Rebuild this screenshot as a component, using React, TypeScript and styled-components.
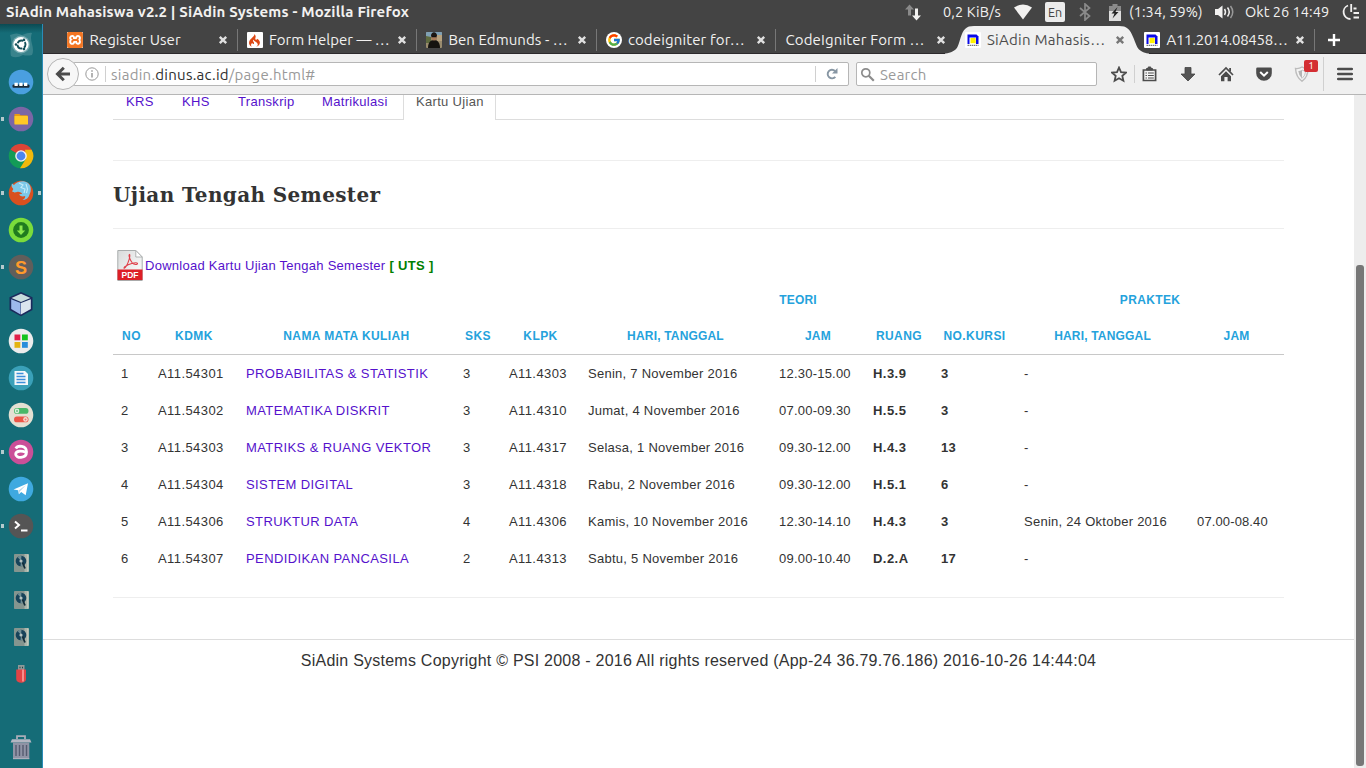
import React from "react";
import styled, { createGlobalStyle } from "styled-components";
import { FcGoogle } from "react-icons/fc";
import { SiXampp, SiCodeigniter } from "react-icons/si";

const uiFont = `"Ubuntu", "Noto Sans", "Open Sans", sans-serif`;
const pageFont = `"Liberation Sans", Arial, sans-serif`;

const GlobalStyle = createGlobalStyle`
  * { box-sizing: border-box; }
  html, body { margin: 0; padding: 0; overflow: hidden; background: #fff; }
  a { text-decoration: none; color: #5511cc; }
`;

const Desktop = styled.div`
  width: 1366px;
  height: 768px;
  display: flex;
  flex-direction: column;
  overflow: hidden;
  font-family: ${uiFont};
`;

/* ---------- top panel ---------- */

const Panel = styled.header`
  height: 24px;
  flex: none;
  display: flex;
  align-items: center;
  justify-content: space-between;
  padding: 0 6px 0 6px;
  background: #444444;
  color: #f2f1f0;
`;

const Label = styled.span<{ $size?: number; $track?: number; $weight?: number; $w?: number }>`
  display: inline-block;
  white-space: pre;
  font-size: ${(p) => p.$size ?? 15}px;
  letter-spacing: ${(p) => p.$track ?? 0}px;
  font-weight: ${(p) => p.$weight ?? 400};
  width: ${(p) => (p.$w ? `${p.$w}px` : "auto")};
  line-height: 24px;
`;

const FieldText = styled(Label)`
  padding-top: 1px;
`;

const Indicators = styled.div`
  display: flex;
  align-items: center;
  height: 24px;
  svg { flex: none; display: block; }
`;

const Gap = styled.span<{ $w: number }>`
  flex: none;
  width: ${(p) => p.$w}px;
`;

const Keyboard = styled.span`
  flex: none;
  width: 20px;
  height: 20px;
  border-radius: 2px;
  background: #ececec;
  color: #444;
  font-size: 12.5px;
  line-height: 20px;
  text-align: center;
`;

/* ---------- launcher ---------- */

const Body = styled.div`
  flex: 1;
  display: flex;
  min-height: 0;
`;

const Launcher = styled.nav`
  width: 43px;
  flex: none;
  display: flex;
  flex-direction: column;
  background: linear-gradient(#0b4a52 0, #156c77 9px);
  border-right: 1px solid #2b8cb8;
  padding-top: 2px;
`;

const LauncherItem = styled.div<{ $last?: boolean }>`
  height: 37px;
  display: flex;
  align-items: center;
  margin-top: ${(p) => (p.$last ? "36px" : "0")};
  svg { display: block; margin: 0; flex: none; }
`;

const Pip = styled.i<{ $on?: boolean }>`
  flex: none;
  width: 3px;
  height: 4px;
  margin: 0 4px 0 1px;
  background: ${(p) => (p.$on ? "#b4cacd" : "transparent")};
  & + svg + & { margin: 0 0 0 4px; }
`;

/* ---------- browser chrome ---------- */

const Browser = styled.main`
  flex: 1;
  min-width: 0;
  display: flex;
  flex-direction: column;
`;

const TabStrip = styled.div`
  height: 30px;
  flex: none;
  display: flex;
  padding-left: 15.4px;
  background: #444444;
  box-shadow: inset 0 -1px #2c292c;
`;

const BrowserTab = styled.div<{ $active?: boolean; $sep?: boolean }>`
  position: relative;
  width: 179.5px;
  flex: none;
  display: flex;
  align-items: center;
  padding: 2px 9px 0 9px;
  color: ${(p) => (p.$active ? "#4c4c4c" : "#f2f1f0")};
  &::after {
    content: "";
    position: absolute;
    right: 0;
    top: 5px;
    width: 1px;
    height: 22px;
    background: ${(p) => (p.$sep ? "#777" : "transparent")};
  }
`;

const ActiveShape = styled.svg`
  position: absolute;
  left: -11px;
  top: 0;
`;

const Favicon = styled.span<{ $bg?: string; $round?: boolean }>`
  position: relative;
  flex: none;
  width: 16px;
  height: 16px;
  margin-right: 6px;
  display: flex;
  align-items: center;
  justify-content: center;
  background: ${(p) => p.$bg ?? "transparent"};
  border-radius: ${(p) => (p.$round ? "8px" : "1px")};
  overflow: hidden;
`;

const TabTitle = styled(Label)`
  position: relative;
  flex: 1;
  min-width: 0;
`;

const CloseMark = styled.svg`
  position: relative;
  flex: none;
`;

const Toolbar = styled.div`
  height: 41px;
  flex: none;
  display: flex;
  align-items: center;
  padding-left: 4px;
  background: #f0f0f0;
  border-bottom: 1px solid #b6b6b6;
  svg { flex: none; display: block; }
`;

const BackButton = styled.button`
  position: relative;
  z-index: 1;
  width: 32px;
  height: 32px;
  padding: 0;
  border: 1px solid #b4b4b4;
  border-radius: 50%;
  background: #f7f7f7;
  display: flex;
  align-items: center;
  justify-content: center;
`;

const Field = styled.div<{ $w: number }>`
  width: ${(p) => p.$w}px;
  height: 24px;
  display: flex;
  align-items: center;
  background: #fff;
  border: 1px solid #b6b6b6;
  border-radius: 2px;
  color: #999;
`;

const UrlField = styled(Field)`
  margin-left: -6px;
  padding-left: 11px;
  b { font-weight: 400; color: #2e2e2e; }
`;

const SearchField = styled(Field)`
  margin-left: 7px;
  padding-left: 3px;
`;

const Rule = styled.span<{ $h: number }>`
  flex: none;
  width: 1px;
  height: ${(p) => p.$h}px;
  background: #d0d0d0;
`;

const ShieldWrap = styled.span`
  position: relative;
  flex: none;
  width: 16px;
  height: 16px;
`;

const Badge = styled.span`
  position: absolute;
  left: 10px;
  top: -6px;
  width: 14px;
  height: 12px;
  border-radius: 2px;
  background: #d42f33;
  color: #fff;
  font-size: 10px;
  line-height: 12px;
  text-align: center;
`;

/* ---------- page ---------- */

const Viewport = styled.div`
  flex: 1;
  display: flex;
  min-height: 0;
  font-family: ${pageFont};
  font-size: 13px;
  letter-spacing: 0.26px;
  color: #333;
`;

const Page = styled.div`
  flex: 1;
  background: #fff;
  overflow: hidden;
`;

const Scrollbar = styled.div`
  width: 12px;
  flex: none;
  padding: 170px 2px 0;
  background: #ededed;
`;

const Thumb = styled.div`
  height: 501px;
  border-radius: 3px;
  background: #777777;
`;

const Container = styled.section`
  width: 1171px;
  margin-left: 70px;
`;

const NavTabs = styled.ul`
  display: flex;
  height: 25px;
  margin: 0;
  padding: 0;
  list-style: none;
  border-bottom: 1px solid #ddd;
`;

const NavItem = styled.li<{ $w: number; $active?: boolean }>`
  width: ${(p) => p.$w}px;
  height: 25px;
  padding-left: ${(p) => (p.$active ? 12 : 13)}px;
  line-height: 14px;
  white-space: nowrap;
  letter-spacing: 0.32px;
  color: #555;
  ${(p) => p.$active && "background: #fff; border: solid #ddd; border-width: 0 1px;"}
`;

const Divider = styled.hr<{ $top: number }>`
  height: 1px;
  margin: ${(p) => p.$top}px 0 0;
  border: 0;
  background: #eee;
`;

const Heading = styled.h4`
  margin: 0;
  height: 67px;
  font: 700 20px/69px "DejaVu Serif", serif;
  letter-spacing: 0.36px;
`;

const Download = styled.p`
  display: flex;
  align-items: center;
  height: 33px;
  margin: 20px 0 0;
  padding-left: 4px;
  svg { display: block; margin-right: 2px; }
  strong { color: #008000; margin-left: 4px; letter-spacing: 0.35px; }
`;

const Table = styled.table`
  width: 1171px;
  table-layout: fixed;
  border-collapse: separate;
  border-spacing: 0;
`;

const HeadCell = styled.th<{ $rule?: boolean; $track?: number }>`
  height: ${(p) => (p.$rule ? 37 : 36)}px;
  padding: 0;
  font-size: 12px;
  letter-spacing: ${(p) => p.$track ?? 0.35}px;
  color: #25a2dc;
  white-space: nowrap;
  text-align: center;
  ${(p) => p.$rule && "border-bottom: 1px solid #c8c8c8;"}
`;

const Cell = styled.td<{ $bold?: boolean; $track: number }>`
  height: 37px;
  padding: 0 0 0 8px;
  white-space: nowrap;
  letter-spacing: ${(p) => p.$track}px;
  font-weight: ${(p) => (p.$bold ? 700 : 400)};
`;

const Footer = styled.footer`
  margin-top: 41px;
  border-top: 1px solid #ddd;
  font-size: 16px;
  letter-spacing: 0.24px;
  line-height: 41px;
  text-align: center;
`;

/* ---------- drawings ---------- */

const Close = ({ color = "#e0e0e0" }: { color?: string }) => (
  <CloseMark width="12" height="12" viewBox="0 0 12 12">
    <path d="M2.8 2.8L9.2 9.2M9.2 2.8L2.8 9.2" stroke={color} strokeWidth="2.4" />
  </CloseMark>
);

const DinusIcon = () => (
  <svg width="16" height="16" viewBox="0 0 16 16">
    <path d="M2.500 2.500h9l2 2V12H2.500z" fill="#0a0ae6" />
    <path d="M4.500 5.500h6.500V12H4.500z" fill="#fff" />
    <rect x="5.500" y="6" width="5.200" height="5.200" fill="#fff000" />
    <path d="M2.500 13.400h11" stroke="#777" strokeWidth="1.200" strokeDasharray="1.500 .6" />
  </svg>
);

const PhotoIcon = () => (
  <svg width="16" height="16" viewBox="0 0 16 16">
    <rect width="16" height="16" fill="#9a8c6e" />
    <rect width="16" height="5" fill="#7fa0b4" />
    <path d="M0 4l5 1v6H0z" fill="#5f6b3f" />
    <path d="M11 3h5v6h-5z" fill="#b7a27e" />
    <path d="M2 16c0-5 2-8 6-8s6 3 6 8z" fill="#15130f" />
    <ellipse cx="8" cy="5" rx="2.8" ry="3.6" fill="#a97b58" />
    <path d="M5 4c0-5 6-5 6 0z" fill="#1d1713" />
    <path d="M5.4 4.6h5.2" stroke="#111" strokeWidth="1.2" />
  </svg>
);

const PdfIcon = () => (
  <svg width="26" height="33" viewBox="0 0 26 33">
    <defs>
      <linearGradient id="paper" x1="0" y1="0" x2="1" y2="1">
        <stop offset="0" stopColor="#d9dbdb" />
        <stop offset="1" stopColor="#fff" />
      </linearGradient>
    </defs>
    <path d="M.8 31V1.5h18L25.2 8v23z" fill="url(#paper)" stroke="#a9adad" />
    <path d="M18.8 1.5V8h6.4z" fill="#fff" stroke="#a9adad" strokeWidth=".9" />
    <path d="M12.600 5.500c-1.600.6.6 5.500 2.600 8.300c1.800 2 5.500 2.200 5.300.6c-.6-1.600-8.500-.2-13 3.600c-1.500 2 .4 1.500 2-1.200C11.500 13 13.500 7 12.600 5.500z" fill="none" stroke="#e0404a" strokeWidth="1.100" />
    <rect x=".5" y="20.500" width="25" height="10.500" fill="#dd1f26" />
    <path d="M.5 31.500h25" stroke="#aaa" />
    <text x="13" y="28.900" textAnchor="middle" fill="#fff" fontFamily="Liberation Sans" fontSize="8.500" fontWeight="700" letterSpacing="0">PDF</text>
  </svg>
);

const Icon = ({ children }: { children: React.ReactNode }) => (
  <svg width="26" height="26" viewBox="0 0 26 26">{children}</svg>
);

const Disk = () => (
  <Icon>
    <rect x="6" y="4" width="14.500" height="18" rx=".8" fill="#85958f" />
    <rect x="16.500" y="4" width="4" height="18" fill="#aab4aa" />
    <rect x="19.500" y="4.500" width="1" height="17" fill="#d8dccb" />
    <circle cx="13" cy="11" r="5.300" fill="#17435a" />
    <path d="M13 11L9.500 7a5.300 5.300 0 014-1.300zM13 11l3.500 4a5.300 5.300 0 01-4 1.300z" fill="#6f8e95" />
    <circle cx="13" cy="11" r="1.600" fill="#b4c2c0" />
    <path d="M14.500 12.500l2.500 6" stroke="#122c38" strokeWidth="1.800" />
  </Icon>
);

const launcherItems: { left?: boolean; right?: boolean; icon: React.ReactNode }[] = [
  { icon: (
    <Icon>
      <path d="M2 3q7-3 12 0q8-3 10-2q-2 4 0 11t0 11q-5 1-9 0q-7 4-12 1q-1-4 0-9t-1-12z" fill="#8fb9bd" opacity=".3" />
      <circle cx="13" cy="12.500" r="9" fill="#a9cdd0" opacity=".5" />
      <circle cx="13" cy="12.500" r="7.600" fill="#fff" />
      <circle cx="13.500" cy="12.500" r="4" fill="none" stroke="#14505a" strokeWidth="1.900" strokeDasharray="6.700 1.680" strokeDashoffset="-5.200" />
      <circle cx="8" cy="12.500" r="1.300" fill="#14505a" />
      <circle cx="16" cy="7.900" r="1.300" fill="#14505a" />
      <circle cx="16" cy="17.100" r="1.300" fill="#14505a" />
    </Icon>) },
  { icon: (
    <Icon>
      <circle cx="13" cy="13" r="12.300" fill="#4a9fe0" />
      <rect x="4.500" y="15.500" width="17" height="3.300" rx="1" fill="#1c2c38" />
      <path d="M6.500 15.300h3.300M11.300 15.300h3.300M16 15.300h3.300" stroke="#fff" strokeWidth="3.200" />
    </Icon>) },
  { left: true, icon: (
    <Icon>
      <circle cx="13" cy="13" r="12.300" fill="#7b66a5" />
      <path d="M6.500 8h5l1 1.300h7V17.500h-13z" fill="#e79a16" />
      <rect x="6.500" y="10" width="13.500" height="8.500" rx=".6" fill="#ffc926" />
    </Icon>) },
  { icon: (
    <Icon>
      <path d="M13 13L2.350 6.850A12.300 12.300 0 0123.650 6.850z" fill="#dc4437" />
      <path d="M2.350 6.850A12.300 12.300 0 0013 25.300l5-9.500-5-2.800z" fill="#139b57" />
      <path d="M23.650 6.850A12.300 12.300 0 0112 25.300l6-9.500-1-8.950z" fill="#f2b90c" />
      <circle cx="13" cy="13" r="5.800" fill="#f2f2f2" />
      <circle cx="13" cy="13" r="4.400" fill="#4a86ee" />
    </Icon>) },
  { left: true, right: true, icon: (
    <Icon>
      <circle cx="13" cy="13" r="12.300" fill="#d9501f" />
      <path d="M4 3.500l2 1.500C9 1 16 0 20 3c3.500 3 3.500 8 1.500 11.500-.8 3-3 5.500-7 5.500 2-1 3-2.500 2.600-4-2 1-5 .5-6-1.500 1-.5 2-.3 3-1-1.500-1-3-2-5-1.500-2 .5-4 1-5-1 1.200-.8 1.500-2 .5-3-1.200-1.200-1.200-3-.6-4.500z" fill="#7cc8e8" />
      <path d="M11 3l4 2-2 2.500 4 1.500-1 4M18 4l1.500 5-1 4" fill="none" stroke="#c6ebf8" strokeWidth="1.100" />
    </Icon>) },
  { icon: (
    <Icon>
      <circle cx="13" cy="13" r="12.300" fill="#7bdc3b" />
      <circle cx="13" cy="13" r="7.900" fill="#207b1f" />
      <path d="M11.500 8.500h3v5h2.700L13 18l-4.200-4.500h2.700z" fill="#8be84d" />
    </Icon>) },
  { left: true, icon: (
    <Icon>
      <circle cx="13" cy="13" r="12.300" fill="#615e5b" />
      <text x="13" y="19.500" textAnchor="middle" fill="#ff9a2b" fontFamily="Liberation Sans" fontWeight="700" fontSize="18">S</text>
    </Icon>) },
  { icon: (
    <Icon>
      <path d="M13 1L24.500 6.300V19L13 25.300 1.500 19V6.300z" fill="#1b2a5c" />
      <path d="M13 2.800L22.500 7 13 11 3.500 7z" fill="#c8dcdc" />
      <path d="M3.200 8.200L12.600 12v11.500L3.200 18z" fill="#9db9ec" />
      <path d="M22.800 8.200L13 12v11.500l9.800-5.500z" fill="#dbe5ee" />
    </Icon>) },
  { icon: (
    <Icon>
      <circle cx="13" cy="13" r="12.300" fill="#ececec" />
      <rect x="6.500" y="6.500" width="5.800" height="5.800" fill="#e22048" />
      <rect x="14" y="6.500" width="5.800" height="5.800" fill="#13c31c" />
      <rect x="6.500" y="14" width="5.800" height="5.800" fill="#e3b40f" />
      <rect x="14" y="14" width="5.800" height="5.800" fill="#2a8ddb" />
    </Icon>) },
  { icon: (
    <Icon>
      <circle cx="13" cy="13" r="12.300" fill="#3aa0b8" />
      <path d="M6.500 6h10.500l3 3v11H6.500z" fill="#f5f8fa" />
      <path d="M8.500 8.500h7M8.500 11.500h9M8.500 14.500h9M8.500 17.500h9" stroke="#3d8fdb" strokeWidth="1.400" />
    </Icon>) },
  { icon: (
    <Icon>
      <circle cx="13" cy="13" r="12.300" fill="#e4e0d2" />
      <rect x="6" y="6" width="14.500" height="5.800" rx="2.900" fill="#49b868" />
      <circle cx="9" cy="8.900" r="2.300" fill="#dcefdc" /><circle cx="9" cy="8.900" r="1" fill="#6cc083" />
      <rect x="6" y="14.500" width="14.500" height="5.800" rx="2.900" fill="#ec5647" />
      <circle cx="17.500" cy="17.400" r="2.300" fill="#f6dcd6" /><circle cx="17.500" cy="17.400" r="1" fill="#ec7a6e" />
    </Icon>) },
  { left: true, icon: (
    <Icon>
      <circle cx="13" cy="13" r="12.300" fill="#cb4f98" />
      <path d="M7.800 9.500C9.500 6.300 18.500 6 18.500 13c0 7-10.800 6.500-10.800 2.200 0-3.600 6-3.600 10-2" fill="none" stroke="#fff" strokeWidth="2.800" />
    </Icon>) },
  { icon: (
    <Icon>
      <circle cx="13" cy="13" r="12.300" fill="#3fa9e0" />
      <path d="M5.500 13.500L20 7.300 17.700 19.300l-4.500-3.300-2.300 2.300-.8-4z" fill="#fff" />
      <path d="M10.500 14.500L18 9l-6.200 6.500-.8 2.500z" fill="#b7d5e8" />
    </Icon>) },
  { left: true, icon: (
    <Icon>
      <circle cx="13" cy="13" r="12.300" fill="#555555" />
      <path d="M7 8.500l4 3.500-4 3.500" fill="none" stroke="#fff" strokeWidth="2" />
      <path d="M13 17.500h6.500" stroke="#fff" strokeWidth="2" />
    </Icon>) },
  { icon: <Disk /> },
  { icon: <Disk /> },
  { icon: <Disk /> },
  { icon: (
    <Icon>
      <rect x="10" y="4" width="6.500" height="5" fill="#8e9999" />
      <path d="M11.500 6.500h1M14 6.500h1" stroke="#244" strokeWidth="1.300" />
      <path d="M8.200 8.500h9.800V18c0 5-9.800 5-9.800 0z" fill="#e04446" />
      <path d="M14 8.500h2v12h-2z" fill="#f58d8b" />
    </Icon>) },
];

const Trash = () => (
  <svg width="26" height="28" viewBox="0 0 26 28">
    <path d="M9 6V3.200h8V6" fill="none" stroke="#a9acb8" strokeWidth="1.800" />
    <path d="M2.500 9.500l1.500-3.300h18l1.500 3.300z" fill="#b4b6c2" />
    <path d="M5 9.500h16.300V26H5z" fill="#8f93a5" />
    <path d="M8 12v11M11.500 12v11M15 12v11M18.500 12v11" stroke="#555b70" strokeWidth="1.400" />
    <path d="M5 25.700h16.300" stroke="#b4b6c2" />
  </svg>
);

/* ---------- data ---------- */

const tabs = [
  { title: "Register User", track: 0.07, icon: <Favicon $bg="#fff"><SiXampp size={16} color="#f37623" /></Favicon> },
  { title: "Form Helper — …", track: 0, icon: <Favicon $bg="#fff"><SiCodeigniter size={13} color="#dd4814" /></Favicon> },
  { title: "Ben Edmunds - …", track: 0.07, icon: <Favicon><PhotoIcon /></Favicon> },
  { title: "codeigniter for…", track: 0.13, icon: <Favicon $bg="#fff" $round><FcGoogle size={14} /></Favicon> },
  { title: "CodeIgniter Form …", track: 0.15, noSep: true },
  { title: "SiAdin Mahasis…", track: 0.28, active: true, icon: <Favicon $bg="#fff"><DinusIcon /></Favicon> },
  { title: "A11.2014.08458…", track: -0.26, icon: <Favicon $bg="#fff"><DinusIcon /></Favicon> },
];

const columns = [37, 88, 217, 46, 79, 191, 94, 68, 83, 173, 95];
const cellTracks = [0, 0.42, 0.4, 0, 0.4, 0.26, 0.22, 0.45, 0.3, 0.26, 0.12];
const headings = ["NO", "KDMK", "NAMA MATA KULIAH", "SKS", "KLPK", "HARI, TANGGAL", "JAM", "RUANG", "NO.KURSI", "HARI, TANGGAL", "JAM"];
const headTracks = [0.5, 0.5, 0.4, 0.5, 0.45, 0.18, 0.3, 0.45, 0.45, 0.18, 0.3];
const rows = [
  ["1", "A11.54301", "PROBABILITAS & STATISTIK", "3", "A11.4303", "Senin, 7 November 2016", "12.30-15.00", "H.3.9", "3", "-", ""],
  ["2", "A11.54302", "MATEMATIKA DISKRIT", "3", "A11.4310", "Jumat, 4 November 2016", "07.00-09.30", "H.5.5", "3", "-", ""],
  ["3", "A11.54303", "MATRIKS & RUANG VEKTOR", "3", "A11.4317", "Selasa, 1 November 2016", "09.30-12.00", "H.4.3", "13", "-", ""],
  ["4", "A11.54304", "SISTEM DIGITAL", "3", "A11.4318", "Rabu, 2 November 2016", "09.30-12.00", "H.5.1", "6", "-", ""],
  ["5", "A11.54306", "STRUKTUR DATA", "4", "A11.4306", "Kamis, 10 November 2016", "12.30-14.10", "H.4.3", "3", "Senin, 24 Oktober 2016", "07.00-08.40"],
  ["6", "A11.54307", "PENDIDIKAN PANCASILA", "2", "A11.4313", "Sabtu, 5 November 2016", "09.00-10.40", "D.2.A", "17", "-", ""],
];

/* ---------- sections ---------- */

const TopPanel = () => (
  <Panel>
    <Label $weight={700} $track={0.18}>SiAdin Mahasiswa v2.2 | SiAdin Systems - Mozilla Firefox</Label>
    <Indicators>
      <svg width="18" height="18" viewBox="0 0 18 18">
        <path d="M5.500 1.500L1 6.500h3v6h3v-6h3z" fill="#8a8a8a" />
        <path d="M12.500 17.500l4.500-5h-3v-7h-3v7H8z" fill="#f2f1f0" />
      </svg>
      <Gap $w={21} />
      <Label $size={14.5} $track={0.15} $w={59}>0,2 KiB/s</Label>
      <Gap $w={12} />
      <svg width="18" height="16" viewBox="0 0 18 16"><path d="M0 3.500Q9-2.500 18 3.500L9 15.500z" fill="#f2f1f0" /></svg>
      <Gap $w={13} />
      <Keyboard>En</Keyboard>
      <Gap $w={13} />
      <svg width="14" height="18" viewBox="0 0 14 18"><path d="M2 5l9.500 8L7 17V1l4.500 4L2 13" fill="none" stroke="#8a8a8a" strokeWidth="1.700" /></svg>
      <Gap $w={17} />
      <svg width="12" height="17" viewBox="0 0 12 17">
        <path d="M3.500 0h5v2H12v5H0V2h3.500z" fill="#8a8a8a" />
        <path d="M0 7h12v10H0z" fill="#dedede" />
        <path d="M8.500 3L2.500 9.500h3L3.500 14.500l6-6.500h-3z" fill="#222" />
      </svg>
      <Gap $w={8} />
      <Label $size={14.5} $track={0.1} $w={76}>(1:34, 59%)</Label>
      <Gap $w={10} />
      <svg width="21" height="16" viewBox="0 0 21 16">
        <path d="M0 5h3l4.500-3.500v13L3 11H0z" fill="#f2f1f0" />
        <path d="M9.500 5q2 3 0 6M12.500 3.500q3.500 4.500 0 9" fill="none" stroke="#f2f1f0" strokeWidth="1.500" />
        <path d="M15.500 2q4.500 6 0 12" fill="none" stroke="#999" strokeWidth="1.500" />
      </svg>
      <Gap $w={9} />
      <Label $size={14.5} $track={0.05} $w={84}>Okt 26 14:49</Label>
      <Gap $w={13} />
      <svg width="18" height="18" viewBox="0 0 18 18">
        <path d="M6 2.500A7 7 0 008.500 16" fill="none" stroke="#f2f1f0" strokeWidth="1.800" />
        <path d="M9.200 1v8M11.500 5.500h3M11.500 10h5.500M11.500 14.500h5.500" stroke="#f2f1f0" strokeWidth="1.800" />
      </svg>
    </Indicators>
  </Panel>
);

const ToolbarIcons = () => (
  <>
    <Gap $w={14} />
    <svg width="16" height="17" viewBox="0 0 16 17"><path d="M8 1.600l2 4.500 5 .5-3.700 3.300 1.100 4.900L8 12.300l-4.400 2.500 1.100-4.900L1 6.600l5-.5z" fill="none" stroke="#4c4c4c" strokeWidth="1.800" /></svg>
    <Gap $w={7} />
    <Rule $h={18} />
    <Gap $w={7} />
    <svg width="15" height="16" viewBox="0 0 15 16">
      <path d="M1.400 4h12.200v10.500H1.400z" fill="#f4f4f4" stroke="#4c4c4c" strokeWidth="1.700" />
      <path d="M4.500 4V2.500h1.700V1h2.600v1.500h1.700V4z" fill="#4c4c4c" stroke="#4c4c4c" />
      <path d="M3.500 7h1.400M6 7h5.800M3.500 9.500h1.400M6 9.500h5.800M3.500 12h1.400M6 12h5.800" stroke="#4c4c4c" strokeWidth="1.100" />
    </svg>
    <Gap $w={23} />
    <svg width="16" height="16" viewBox="0 0 16 16"><path d="M5 1.500h6V8h4L8 15 1 8h4z" fill="#555" stroke="#444" strokeWidth=".8" /></svg>
    <Gap $w={22} />
    <svg width="16" height="16" viewBox="0 0 16 16">
      <path d="M1 9L8 2l7 7" fill="none" stroke="#4c4c4c" strokeWidth="1.700" />
      <path d="M3 10.200l5-5 5 5V15.200H9.600v-4.200H6.400v4.200H3z" fill="#4c4c4c" />
      <path d="M11.200 2h1.800v3.500h-1.800z" fill="#4c4c4c" />
    </svg>
    <Gap $w={22} />
    <svg width="16" height="16" viewBox="0 0 16 16">
      <path d="M1.500 1.500h13q1.300 0 1.300 1.300v4.400a7.800 7.500 0 01-15.600 0V2.800q0-1.300 1.300-1.300z" fill="#4c4c4c" />
      <path d="M4.200 6L8 9.700 11.800 6" fill="none" stroke="#fff" strokeWidth="2" />
    </svg>
    <Gap $w={22} />
    <ShieldWrap>
      <svg width="16" height="16" viewBox="0 0 16 16">
        <path d="M1.500 2.500Q5 3 8 1q3 2 6 1.500Q14 11 8 15.300 2 11 1.500 2.500z" fill="#f4f4f4" stroke="#bcbcbc" strokeWidth="1.400" />
        <path d="M4.300 5Q6 5 8 4v8.500Q4.700 9.500 4.300 5z" fill="#b5b5b5" />
        <path d="M8 4q2 1 3.700 1-.2 4.500-3.700 7.500" fill="none" stroke="#c4c4c4" />
      </svg>
      <Badge>1</Badge>
    </ShieldWrap>
    <Gap $w={13} />
    <Rule $h={34} />
    <Gap $w={13} />
    <svg width="16" height="14" viewBox="0 0 16 14"><path d="M1.200 2h13.600M1.200 7h13.600M1.200 12h13.600" stroke="#4c4c4c" strokeWidth="2.600" strokeLinecap="round" /></svg>
  </>
);

const Chrome = () => (
  <>
    <TabStrip>
      {tabs.map((t) => (
        <BrowserTab key={t.title} $active={t.active} $sep={!t.active && !t.noSep}>
          {t.active && (
            <ActiveShape width="204" height="30" viewBox="0 0 204 30">
              <path d="M0 29.500C13 28 13 22 15.500 14 18.500 5 21 2 29 2H174C182 2 185 5 188.500 14 192 22 192 28 204 29.500V30H0z" fill="#f0f0f0" />
            </ActiveShape>
          )}
          {t.icon}
          <TabTitle $track={t.track}>{t.title}</TabTitle>
          <Close color={t.active ? "#777" : undefined} />
        </BrowserTab>
      ))}
      <Gap $w={12} />
      <svg width="14" height="32" viewBox="0 0 14 32"><path d="M7 10v12M1 16h12" stroke="#fff" strokeWidth="2.400" /></svg>
    </TabStrip>
    <Toolbar>
      <BackButton aria-label="Back">
        <svg width="16" height="16" viewBox="0 0 16 16"><path d="M8.800 1.700L2.500 8l6.300 6.300M3 8h12" fill="none" stroke="#4c4c4c" strokeWidth="3" /></svg>
      </BackButton>
      <UrlField $w={776}>
        <svg width="14" height="14" viewBox="0 0 14 14">
          <circle cx="7" cy="7" r="6.200" fill="none" stroke="#999" />
          <path d="M7 6v4.500M7 3.300v1.500" stroke="#999" strokeWidth="1.500" />
        </svg>
        <Gap $w={6} />
        <Rule $h={16} />
        <Gap $w={5} />
        <FieldText $w={704} $track={0.26}>siadin.<b>dinus.ac.id</b>/page.html#</FieldText>
        <Rule $h={16} />
        <Gap $w={10} />
        <svg width="12" height="12" viewBox="0 0 12 12">
          <path d="M9.300 8.800A4.300 4.300 0 119 3" fill="none" stroke="#8796a3" strokeWidth="1.900" />
          <path d="M11.500 0v5.500H6z" fill="#8796a3" />
        </svg>
      </UrlField>
      <SearchField $w={241}>
        <svg width="15" height="15" viewBox="0 0 15 15">
          <circle cx="5.800" cy="5.800" r="4" fill="none" stroke="#8c8c8c" strokeWidth="1.700" />
          <path d="M8.800 8.800l5 5" stroke="#8c8c8c" strokeWidth="2.200" />
        </svg>
        <Gap $w={5} />
        <FieldText $track={0.25}>Search</FieldText>
      </SearchField>
      <ToolbarIcons />
    </Toolbar>
  </>
);

const Schedule = () => (
  <Table>
    <colgroup>{columns.map((w, i) => <col key={i} width={w} />)}</colgroup>
    <thead>
      <tr>
        <HeadCell colSpan={5} />
        <HeadCell colSpan={4} $track={0.2}>TEORI</HeadCell>
        <HeadCell colSpan={2}>PRAKTEK</HeadCell>
      </tr>
      <tr>{headings.map((h, i) => <HeadCell key={i} $rule $track={headTracks[i]}>{h}</HeadCell>)}</tr>
    </thead>
    <tbody>
      {rows.map((r) => (
        <tr key={r[0]}>
          {r.map((c, i) => (
            <Cell key={i} $bold={i === 7 || i === 8} $track={cellTracks[i]}>{i === 2 ? <a href="#">{c}</a> : c}</Cell>
          ))}
        </tr>
      ))}
    </tbody>
  </Table>
);

export default function App() {
  return (
    <Desktop>
      <GlobalStyle />
      <TopPanel />
      <Body>
        <Launcher>
          {launcherItems.map((it, i) => (
            <LauncherItem key={i}>
              <Pip $on={it.left} />
              {it.icon}
              <Pip $on={it.right} />
            </LauncherItem>
          ))}
          <LauncherItem $last>
            <Pip />
            <Trash />
          </LauncherItem>
        </Launcher>
        <Browser>
          <Chrome />
          <Viewport>
            <Page>
              <Container>
                <NavTabs>
                  <NavItem $w={56}><a href="#">KRS</a></NavItem>
                  <NavItem $w={56}><a href="#">KHS</a></NavItem>
                  <NavItem $w={84}><a href="#">Transkrip</a></NavItem>
                  <NavItem $w={94}><a href="#">Matrikulasi</a></NavItem>
                  <NavItem $w={93} $active>Kartu Ujian</NavItem>
                </NavTabs>
                <Divider $top={40} />
                <Heading>Ujian Tengah Semester</Heading>
                <Divider $top={0} />
                <Download>
                  <PdfIcon />
                  <a href="#">Download Kartu Ujian Tengah Semester</a>
                  <strong>[ UTS ]</strong>
                </Download>
                <Schedule />
                <Divider $top={20} />
              </Container>
              <Footer>SiAdin Systems Copyright © PSI 2008 - 2016 All rights reserved (App-24 36.79.76.186) 2016-10-26 14:44:04</Footer>
            </Page>
            <Scrollbar><Thumb /></Scrollbar>
          </Viewport>
        </Browser>
      </Body>
    </Desktop>
  );
}
